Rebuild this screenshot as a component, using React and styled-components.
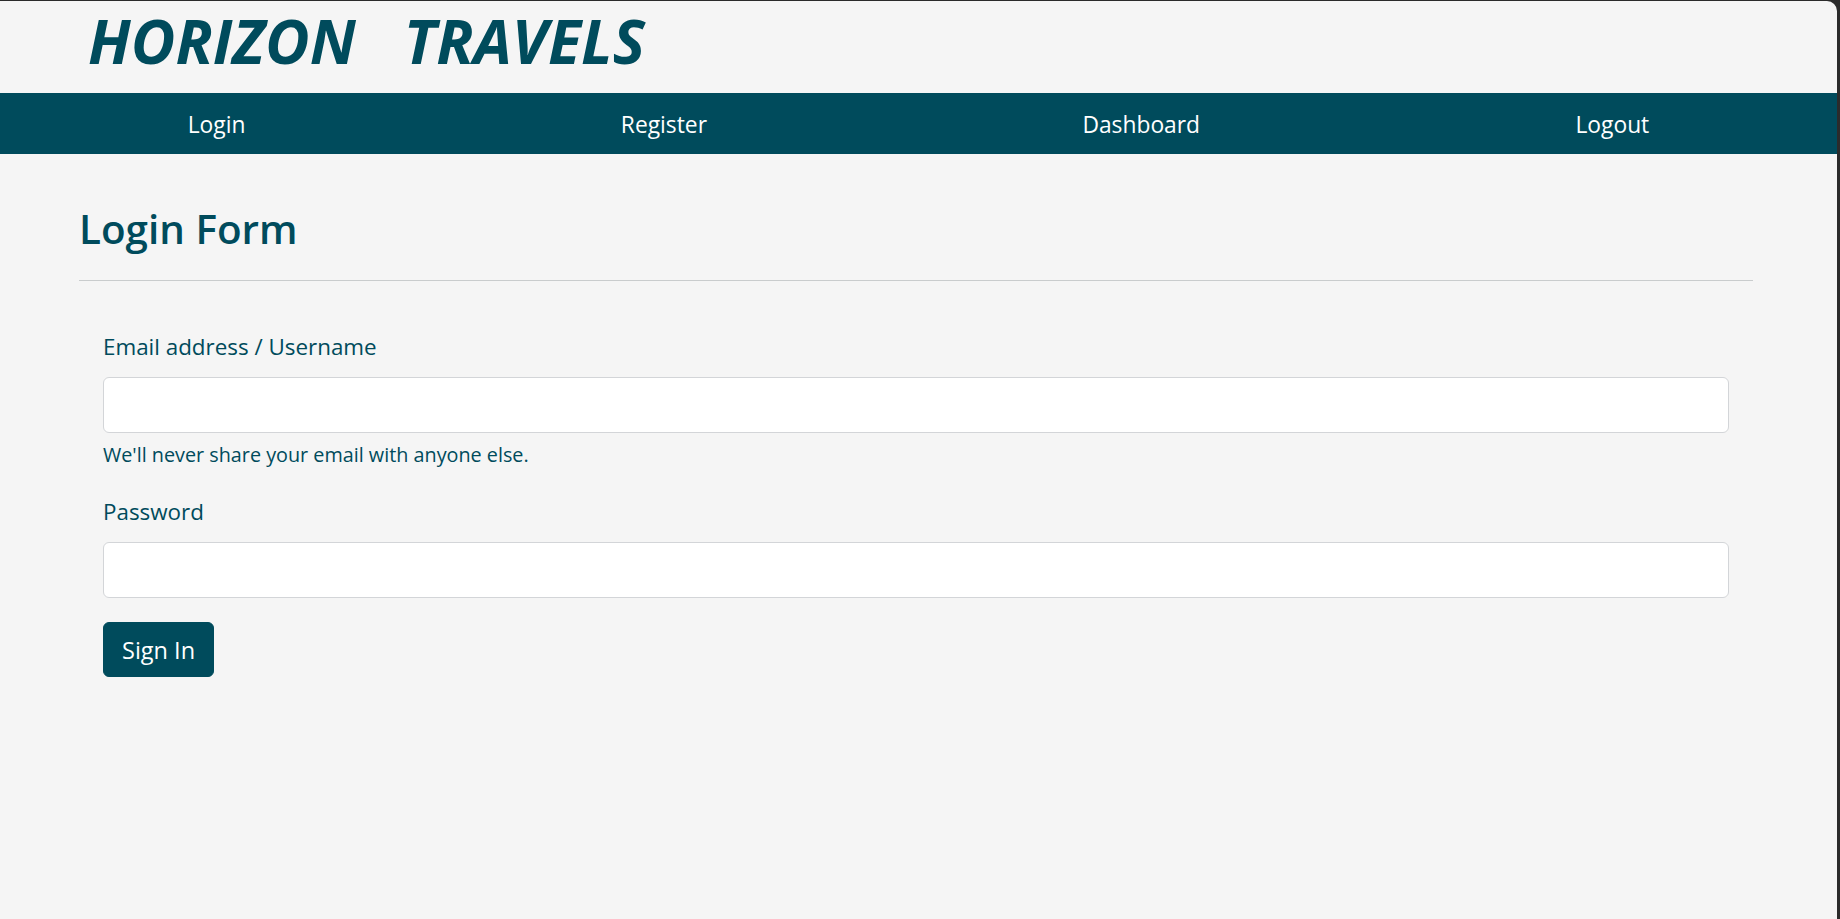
import React from "react";
import styled, { createGlobalStyle } from "styled-components";

const teal = "#004b5c";

const Global = createGlobalStyle`
  html, body { margin: 0; padding: 0; background: #2b2b2b; }
  body { font-family: "Open Sans", "Noto Sans", sans-serif; color: ${teal}; }
  * { box-sizing: border-box; }
`;

const Frame = styled.div`
  margin: 1px 3px 0 0;
  min-height: calc(100vh - 1px);
  background: #f5f5f5;
  border-top-right-radius: 10px;
`;

const Header = styled.header`
  height: 92px;
  display: flex;
  align-items: center;
  padding: 0 0 12px 88px;
`;

const Brand = styled.h1`
  margin: 0;
  font-size: 61px;
  font-weight: 700;
  font-style: italic;
  line-height: 1.25;
  white-space: nowrap;
  padding-right: 12px;
  color: ${teal};
  letter-spacing: 0.1px;
`;

const NavBar = styled.nav`
  background: ${teal};
  height: 61px;
`;

const NavList = styled.ul`
  list-style: none;
  margin: 0;
  padding: 3px 0 0;
  height: 100%;
  display: flex;
  justify-content: space-around;
  align-items: center;
`;

const NavLink = styled.a`
  color: #ffffff;
  text-decoration: none;
  font-size: 22.8px;
  line-height: 1.5;
`;

const Container = styled.main`
  width: 1674px;
  margin: 0 0 0 79px;
`;

const Title = styled.h2`
  margin: 51px 0 0;
  font-size: 40.4px;
  font-weight: 600;
  line-height: 1.2;
  color: ${teal};
`;

const Rule = styled.hr`
  margin: 27px 0 0;
  border: 0;
  border-top: 1px solid #c9cccd;
`;

const Form = styled.form`
  padding: 48px 24px 0;
`;

const Field = styled.div`
  margin-bottom: 24px;
`;

const Label = styled.label`
  display: block;
  font-size: 22.4px;
  line-height: 36px;
  margin-bottom: 12px;
  color: ${teal};
`;

const Input = styled.input`
  display: block;
  width: 100%;
  height: 55.5px;
  padding: 9px 18px;
  font-size: 22px;
  font-family: inherit;
  color: #212529;
  background: #ffffff;
  border: 1.5px solid #d3d5d8;
  border-radius: 6px;
  outline: none;
`;

const Help = styled.div`
  margin-top: 6px;
  font-size: 19.8px;
  line-height: 31.5px;
  color: ${teal};
`;

const Button = styled.button`
  height: 55.5px;
  padding: 0 18px;
  font-family: inherit;
  font-size: 23.5px;
  color: #ffffff;
  background: ${teal};
  border: 1.5px solid ${teal};
  border-radius: 6px;
  cursor: pointer;
`;

export default function App() {
  return (
    <>
      <Global />
      <Frame>
        <Header>
          <Brand>{"HORIZON\u00a0\u00a0\u00a0TRAVELS"}</Brand>
        </Header>
        <NavBar>
          <NavList>
            <li><NavLink href="#">Login</NavLink></li>
            <li><NavLink href="#">Register</NavLink></li>
            <li><NavLink href="#">Dashboard</NavLink></li>
            <li><NavLink href="#">Logout</NavLink></li>
          </NavList>
        </NavBar>
        <Container>
          <Title>Login Form</Title>
          <Rule />
          <Form onSubmit={(e) => e.preventDefault()}>
            <Field>
              <Label htmlFor="email">Email address / Username</Label>
              <Input id="email" type="text" />
              <Help>We'll never share your email with anyone else.</Help>
            </Field>
            <Field>
              <Label htmlFor="password">Password</Label>
              <Input id="password" type="password" />
            </Field>
            <Button type="submit">Sign In</Button>
          </Form>
        </Container>
      </Frame>
    </>
  );
}
